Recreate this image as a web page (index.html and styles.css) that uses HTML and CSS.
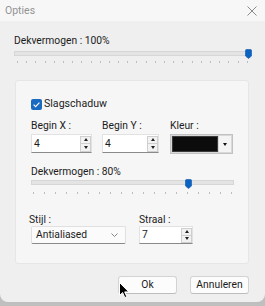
FILE: index.html
```html
<!DOCTYPE html>
<html>
<head>
<meta charset="utf-8">
<link rel="stylesheet" href="styles.css">
</head>
<body>
<div class="window">
  <div class="titlebar">
    <span class="title">Opties</span>
    <svg class="close" width="10" height="10" viewBox="0 0 10 10"><path d="M0.5 0.5L9.5 9.5M9.5 0.5L0.5 9.5" stroke="#8a8a8a" stroke-width="1"/></svg>
  </div>
  <div class="content">
    <div class="label opacity-label">Dekvermogen : 100%</div>
    <div class="slider slider-main">
      <div class="track"></div>
      <div class="ticks">
        <i></i><i></i><i></i><i></i><i></i><i></i><i></i><i></i><i></i><i></i><i></i><i></i><i></i><i></i><i></i><i></i><i></i><i></i><i></i><i></i><i></i><i></i><i></i><i></i><i></i><i></i>
      </div>
      <svg class="thumb" style="left:231px" width="7" height="10" viewBox="0 0 7 10"><path d="M0.5 1.5Q0.5 0.5 1.5 0.5H5.5Q6.5 0.5 6.5 1.5V7L3.5 9.5L0.5 7Z" fill="#0a62c2" stroke="#0b56a8" stroke-width="0.6"/></svg>
    </div>

    <div class="group">
      <div class="check">
        <span class="box"><svg width="11" height="11" viewBox="0 0 11 11"><path d="M2.6 5.7L4.6 7.6L8.4 3.6" fill="none" stroke="#fff" stroke-width="1.1"/></svg></span>
        <span>Slagschaduw</span>
      </div>

      <div class="fields">
        <div class="field field-x">
          <div class="label">Begin X :</div>
          <div class="spin">
            <span class="value">4</span>
            <span class="arrows"><span class="arr up"></span><span class="arr down"></span></span>
          </div>
        </div>
        <div class="field field-y">
          <div class="label">Begin Y :</div>
          <div class="spin">
            <span class="value">4</span>
            <span class="arrows"><span class="arr up"></span><span class="arr down"></span></span>
          </div>
        </div>
        <div class="field field-color">
          <div class="label">Kleur :</div>
          <div class="colorpick">
            <span class="swatch"></span>
            <span class="drop"><span class="tri"></span></span>
          </div>
        </div>
      </div>

      <div class="label opacity2-label">Dekvermogen : 80%</div>
      <div class="slider slider-inner">
        <div class="track"></div>
        <div class="ticks">
          <i></i><i></i><i></i><i></i><i></i><i></i><i></i><i></i><i></i><i></i><i></i><i></i><i></i><i></i><i></i><i></i><i></i><i></i><i></i>
        </div>
        <svg class="thumb" style="left:154px" width="7" height="10" viewBox="0 0 7 10"><path d="M0.5 1.5Q0.5 0.5 1.5 0.5H5.5Q6.5 0.5 6.5 1.5V7L3.5 9.5L0.5 7Z" fill="#0a62c2" stroke="#0b56a8" stroke-width="0.6"/></svg>
      </div>

      <div class="fields fields-bottom">
        <div class="field field-style">
          <div class="label label-style">Stijl :</div>
          <div class="combo">
            <span class="value">Antialiased</span>
            <svg class="chev" width="7" height="4" viewBox="0 0 7 4"><path d="M0.5 0.5L3.5 3.5L6.5 0.5" fill="none" stroke="#777" stroke-width="0.9"/></svg>
          </div>
        </div>
        <div class="field field-radius">
          <div class="label">Straal :</div>
          <div class="spin spin-small">
            <span class="value">7</span>
            <span class="arrows"><span class="arr up"></span><span class="arr down"></span></span>
          </div>
        </div>
      </div>
    </div>

    <div class="buttons">
      <button class="btn btn-ok">Ok</button>
      <button class="btn">Annuleren</button>
    </div>
  </div>
  <svg class="cursor" width="12" height="18" viewBox="0 0 12 18"><path d="M0.5 0.5V13.5L3.6 10.6L5.8 15.6L7.8 14.7L5.7 9.9H9.8Z" fill="#000" stroke="#fff" stroke-width="1"/></svg>
</div>
</body>
</html>
```

FILE: styles.css
```css
* { box-sizing: border-box; }

body {
  margin: 0;
  background: #bfbfbf;
  font-family: Roboto, "Liberation Sans", sans-serif;
  font-size: 10.3px;
  color: #1b1b1b;
}

.window {
  width: 265px;
  height: 302px;
  background: #efefef;
  border-radius: 0 0 8px 8px;
  position: relative;
  overflow: hidden;
}

.titlebar {
  height: 21px;
  background: #f7f7f7;
  display: flex;
  align-items: center;
  justify-content: space-between;
  padding: 0 8px 0 5px;
}

.title {
  color: #939393;
  font-size: 10.5px;
  line-height: 21px;
}

.content {
  padding: 13px 16px 0 14px;
}

.label {
  line-height: 14px;
  height: 14px;
  white-space: nowrap;
}

.slider {
  position: relative;
  height: 16px;
}

.slider-main { margin-top: 1px; }

.track {
  position: absolute;
  left: 0;
  right: 0;
  top: 2px;
  height: 5px;
  background: #e4e4e4;
  border: 1px solid #d6d6d6;
}

.thumb {
  position: absolute;
  top: 0;
}

.ticks {
  position: absolute;
  left: 3px;
  right: 1px;
  top: 12px;
  display: flex;
  justify-content: space-between;
}

.ticks i {
  display: block;
  width: 1px;
  height: 2px;
  background: #bcbcbc;
}

.group {
  margin: 15px 0 0 1px;
  background: #f6f6f6;
  border: 1px solid #e6e6e6;
  border-radius: 3px;
  padding: 17px 15px 19px 15px;
}

.check {
  display: flex;
  align-items: center;
  height: 12px;
  gap: 2px;
  line-height: 12px;
  font-size: 10.6px;
}

.box {
  width: 11px;
  height: 11px;
  background: #1b6ac1;
  border-radius: 2px;
  display: block;
}

.box svg { display: block; }

.fields {
  display: flex;
  margin-top: 9px;
}

.field {
  display: flex;
  flex-direction: column;
}

.field .label { margin-bottom: 1px; }

.field-x { width: 61px; margin-right: 10px; }
.field-y { width: 57px; margin-right: 11px; }
.field-color { width: 63px; }

.spin {
  height: 19px;
  background: #fff;
  border: 1px solid #e2e2e2;
  border-bottom: 1px solid #8a8a8a;
  display: flex;
  align-items: center;
  justify-content: space-between;
  padding-left: 2px;
}

.value { line-height: 16px; }

.arrows {
  display: flex;
  flex-direction: column;
  width: 11px;
  height: 16px;
}

.arr {
  flex: 1;
  border: 1px solid #cfcfcf;
  background: #f2f2f2;
  display: flex;
  align-items: center;
  justify-content: center;
}

.arr + .arr { border-top: 0; }

.arr::after {
  content: "";
  width: 0;
  height: 0;
  border-left: 2.5px solid transparent;
  border-right: 2.5px solid transparent;
}

.up::after { border-bottom: 3px solid #222; }
.down::after { border-top: 3px solid #222; }

.colorpick {
  height: 20px;
  background: #d8d8d8;
  border: 1px solid #c2c2c2;
  display: flex;
  padding: 1px;
  gap: 1px;
}

.swatch {
  flex: 1;
  background: #0c0c0c;
  border: 1px solid #3a3a3a;
}

.drop {
  width: 12px;
  background: #f4f4f4;
  display: flex;
  align-items: center;
  justify-content: center;
}

.tri {
  width: 0;
  height: 0;
  border-left: 2.5px solid transparent;
  border-right: 2.5px solid transparent;
  border-top: 3px solid #111;
}

.opacity2-label { margin-top: 11px; }

.slider-inner {
  margin-top: -1px;
  width: 203px;
  height: 17px;
}

.slider-inner .thumb { top: 1px; }
.slider-inner .ticks { top: 14px; left: 2px; right: 2px; }

.fields-bottom { margin-top: 18px; }

.label-style { margin-left: -2px; }

.field-style { width: 95px; margin-right: 13px; }
.field-radius { width: 54px; }

.field-style .label,
.field-radius .label { margin-bottom: 0; height: 13px; line-height: 13px; }

.combo {
  height: 18px;
  background: #fbfbfb;
  border: 1px solid #e0e0e0;
  border-bottom: 1px solid #8a8a8a;
  border-radius: 2px;
  display: flex;
  align-items: center;
  justify-content: space-between;
  padding: 0 7px 0 4px;
}

.spin-small { height: 18px; }
.spin-small .arrows { height: 15px; }

.buttons {
  display: flex;
  justify-content: flex-end;
  gap: 13px;
  margin-top: 12px;
}

.btn {
  width: 59px;
  height: 18px;
  padding: 0;
  font-family: inherit;
  font-size: 10.3px;
  color: #1b1b1b;
  background: #fcfcfc;
  border: 1px solid #d3d3d3;
  border-bottom-color: #bdbdbd;
  border-radius: 3px;
  line-height: 16px;
}

.cursor {
  position: absolute;
  left: 119px;
  top: 282px;
}
```
